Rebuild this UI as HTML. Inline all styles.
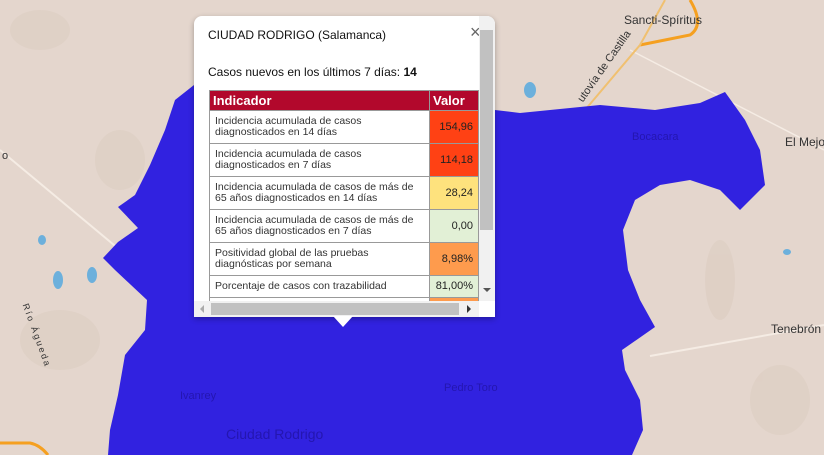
<!DOCTYPE html>
<html><head><meta charset="utf-8"><style>
*{margin:0;padding:0;box-sizing:border-box}
body{width:824px;height:455px;overflow:hidden;background:#e4d6cd;font-family:"Liberation Sans",sans-serif;position:relative}
.lbl{position:absolute;font-size:12px;color:#333;white-space:nowrap}
.blbl{position:absolute;font-size:11px;color:#2416b0;white-space:nowrap}
#pop{position:absolute;left:194px;top:16px;width:301px;height:301px;background:#fff;border-radius:8px 8px 0 0;box-shadow:0 2px 6px rgba(0,0,0,.3);overflow:hidden}
#tip{position:absolute;left:333px;top:316px;width:0;height:0;border-left:10px solid transparent;border-right:10px solid transparent;border-top:11px solid #fff}
.t1{position:absolute;left:14px;top:12px;font-size:12px;color:#111}
.t2{position:absolute;left:14px;top:49px;font-size:12px;color:#111}
table{position:absolute;left:15px;top:74px;border-collapse:collapse;width:270px}
th{background:#b2082c;color:#fff;font-size:13px;text-align:left;height:20px;padding:0 3px;border:1px solid #999}
td{border:1px solid #999;font-size:10.5px;color:#333;padding:2px 5px;line-height:11px;height:33px}
td.v{width:49px;text-align:right;font-size:11px;color:#222;padding-right:5px}
#vs{position:absolute;left:285px;top:0;width:16px;height:285px;background:#f1f1f1}
#hs{position:absolute;left:0;top:285px;width:285px;height:16px;background:#f1f1f1}
</style></head><body>
<svg width="824" height="455" style="position:absolute;left:0;top:0">
<g fill="#dccdc1" opacity=".6">
<ellipse cx="40" cy="30" rx="30" ry="20"/><ellipse cx="120" cy="160" rx="25" ry="30"/><ellipse cx="60" cy="340" rx="40" ry="30"/>
<ellipse cx="780" cy="400" rx="30" ry="35"/><ellipse cx="720" cy="280" rx="15" ry="40"/>
</g>
<path d="M0,150 L120,250" stroke="#f5ece4" stroke-width="2" fill="none"/>
<path d="M630,50 L824,150" stroke="#f5ece4" stroke-width="1.5" fill="none"/>
<path d="M650,356 L824,325" stroke="#f5ece4" stroke-width="2" fill="none"/>
<path d="M0,443 L30,443 Q40,445 48,455" stroke="#f5a020" stroke-width="3" fill="none"/>
<path d="M640,45 L690,35 Q705,25 690,0" stroke="#f5a020" stroke-width="3" fill="none"/>
<path d="M585,110 L640,45 L665,0" stroke="#f0c070" stroke-width="2" fill="none"/>
<g fill="#6cb0dc"><ellipse cx="530" cy="90" rx="6" ry="8"/><ellipse cx="42" cy="240" rx="4" ry="5"/><ellipse cx="58" cy="280" rx="5" ry="9"/><ellipse cx="92" cy="275" rx="5" ry="8"/><ellipse cx="787" cy="252" rx="4" ry="3"/></g>
<path d="M194,85 L175,100 L165,130 L150,165 L135,195 L118,207 L138,228 L118,242 L103,258 L115,270 L147,300 L145,330 L125,355 L118,395 L110,430 L108,455 L632,455 L643,430 L640,400 L625,370 L622,350 L655,327 L640,300 L628,270 L623,230 L635,200 L660,185 L690,180 L720,190 L740,210 L765,185 L760,150 L745,120 L725,92 L700,103 L655,110 L600,105 L520,113 L495,110 L495,88 Z" fill="#3122e0"/>
</svg>
<div class="lbl" style="left:624px;top:13px">Sancti-Spíritus</div>
<div class="lbl" style="left:785px;top:135px">El Mejor</div>
<div class="lbl" style="left:771px;top:322px">Tenebrón</div>
<div class="lbl" style="left:586px;top:92px;transform:rotate(-55deg);transform-origin:left bottom;font-size:11px;line-height:13px">utovía de Castilla</div>
<div class="blbl" style="left:632px;top:131px">Bocacara</div>
<div class="blbl" style="left:180px;top:390px">Ivanrey</div>
<div class="blbl" style="left:444px;top:382px">Pedro Toro</div>
<div class="blbl" style="left:226px;top:426px;font-size:14px">Ciudad Rodrigo</div>
<div class="lbl" style="left:2px;top:150px;font-size:11px">o</div>
<div class="lbl" style="left:30px;top:302px;font-size:9px;transform:rotate(70deg);transform-origin:left top;letter-spacing:2px">Río Águeda</div>
<div id="pop">
<div class="t1">CIUDAD RODRIGO (Salamanca)</div>
<div style="position:absolute;left:276px;top:6px;font-size:18px;color:#666">×</div>
<div class="t2">Casos nuevos en los últimos 7 días: <b>14</b></div>
<table>
<tr><th>Indicador</th><th>Valor</th></tr>
<tr><td>Incidencia acumulada de casos diagnosticados en 14 días</td><td class="v" style="background:#ff4114">154,96</td></tr>
<tr><td>Incidencia acumulada de casos diagnosticados en 7 días</td><td class="v" style="background:#ff4114">114,18</td></tr>
<tr><td>Incidencia acumulada de casos de más de 65 años diagnosticados en 14 días</td><td class="v" style="background:#fee27d">28,24</td></tr>
<tr><td>Incidencia acumulada de casos de más de 65 años diagnosticados en 7 días</td><td class="v" style="background:#e2f0d6">0,00</td></tr>
<tr><td>Positividad global de las pruebas diagnósticas por semana</td><td class="v" style="background:#fe9b4d">8,98%</td></tr>
<tr><td style="height:22px">Porcentaje de casos con trazabilidad</td><td class="v" style="background:#e2f0d6;height:22px">81,00%</td></tr>
<tr><td></td><td class="v" style="background:#fe9b4d"></td></tr>
</table>
<div id="vs"><div style="position:absolute;left:1px;top:14px;width:13px;height:200px;background:#c1c1c1"></div>
<div style="position:absolute;left:4px;top:272px;border-left:4px solid transparent;border-right:4px solid transparent;border-top:4px solid #555"></div></div>
<div id="hs"><div style="position:absolute;left:17px;top:2px;width:248px;height:12px;background:#c1c1c1"></div>
<div style="position:absolute;left:273px;top:4px;border-top:4px solid transparent;border-bottom:4px solid transparent;border-left:4px solid #333"></div>
<div style="position:absolute;left:6px;top:4px;border-top:4px solid transparent;border-bottom:4px solid transparent;border-right:4px solid #aaa"></div></div>
</div>
<div id="tip"></div>
</body></html>
